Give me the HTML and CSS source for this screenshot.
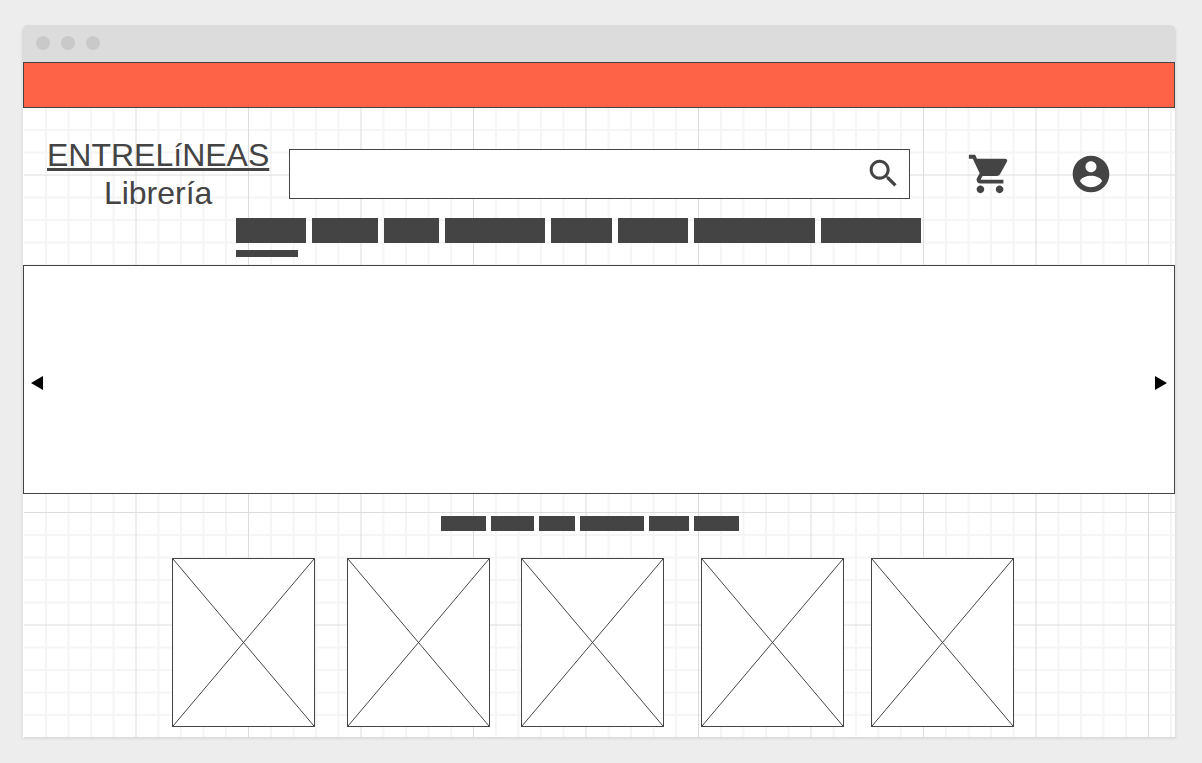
FILE: index.html
```html
<!DOCTYPE html>
<html lang="es">
<head>
<meta charset="utf-8">
<meta name="viewport" content="width=device-width, initial-scale=1">
<title>Entrelíneas Librería</title>
<link rel="stylesheet" href="styles.css">
</head>
<body>
<div class="window">
  <div class="titlebar" aria-hidden="true">
    <span class="dot"></span><span class="dot"></span><span class="dot"></span>
  </div>
  <div class="page">
    <div class="banner"></div>
    <header class="header">
      <div class="header-row">
        <h1 class="brand"><span class="brand-name">ENTRELíNEAS</span><span>Librería</span></h1>
        <form class="search" role="search">
          <input class="search-input" type="text" aria-label="Buscar">
          <button class="icon-button" type="button" aria-label="Buscar">
            <svg class="icon-search" viewBox="0 0 24 24"><path d="M15.5 14h-.79l-.28-.27C15.41 12.59 16 11.11 16 9.5 16 5.91 13.09 3 9.5 3S3 5.91 3 9.5 5.91 16 9.5 16c1.61 0 3.09-.59 4.23-1.57l.27.28v.79l5 4.99L20.49 19l-4.99-5zm-6 0C7.01 14 5 11.99 5 9.5S7.01 5 9.5 5 14 7.01 14 9.5 11.99 14 9.5 14z"/></svg>
          </button>
        </form>
        <div class="actions">
          <button class="icon-button" type="button" aria-label="Carrito">
            <svg class="icon-cart" viewBox="0 0 24 24"><path d="M7 18c-1.1 0-1.99.9-1.99 2S5.9 22 7 22s2-.9 2-2-.9-2-2-2zM1 2v2h2l3.6 7.59-1.35 2.45c-.16.28-.25.61-.25.96 0 1.1.9 2 2 2h12v-2H7.42c-.14 0-.25-.11-.25-.25l.03-.12.9-1.63h7.45c.75 0 1.41-.41 1.75-1.03l3.58-6.49c.08-.14.12-.31.12-.48 0-.55-.45-1-1-1H5.21l-.94-2H1zm16 16c-1.1 0-1.99.9-1.99 2s.89 2 1.99 2 2-.9 2-2-.9-2-2-2z"/></svg>
          </button>
          <button class="icon-button" type="button" aria-label="Cuenta">
            <svg class="icon-account" viewBox="0 0 24 24"><path d="M12 2C6.48 2 2 6.48 2 12s4.48 10 10 10 10-4.48 10-10S17.52 2 12 2zm0 3c1.66 0 3 1.34 3 3s-1.34 3-3 3-3-1.34-3-3 1.34-3 3-3zm0 14.2c-2.5 0-4.71-1.28-6-3.22.03-1.99 4-3.08 6-3.08 1.99 0 5.97 1.09 6 3.08-1.29 1.94-3.5 3.22-6 3.22z"/></svg>
          </button>
        </div>
      </div>
      <nav class="menu" aria-label="Principal">
        <div class="menu-links">
          <a class="bar w-70" href="#" aria-label="Inicio" aria-current="page"></a>
          <a class="bar w-66" href="#" aria-label="Libros"></a>
          <a class="bar w-55" href="#" aria-label="Autores"></a>
          <a class="bar w-100" href="#" aria-label="Novedades"></a>
          <a class="bar w-61" href="#" aria-label="Infantil"></a>
          <a class="bar w-70" href="#" aria-label="Ofertas"></a>
          <a class="bar w-121" href="#" aria-label="Recomendados"></a>
          <a class="bar w-100" href="#" aria-label="Contacto"></a>
        </div>
        <div class="menu-marker"></div>
      </nav>
    </header>
    <section class="carousel" aria-label="Destacados">
      <button class="icon-button" type="button" aria-label="Anterior">
        <svg class="icon-arrow" viewBox="0 0 12 14"><path d="M12 0v14L0 7z"/></svg>
      </button>
      <button class="icon-button" type="button" aria-label="Siguiente">
        <svg class="icon-arrow" viewBox="0 0 12 14"><path d="M0 0v14l12-7z"/></svg>
      </button>
    </section>
    <main class="shelf">
      <div class="heading">
        <span class="bar w-45"></span><span class="bar w-43"></span><span class="bar w-36"></span><span class="bar w-64"></span><span class="bar w-40"></span><span class="bar w-45"></span>
      </div>
      <div class="books">
        <svg class="book" viewBox="0 0 141 167"><path d="M0 0l141 167M141 0L0 167"/></svg>
        <svg class="book" viewBox="0 0 141 167"><path d="M0 0l141 167M141 0L0 167"/></svg>
        <svg class="book" viewBox="0 0 141 167"><path d="M0 0l141 167M141 0L0 167"/></svg>
        <svg class="book" viewBox="0 0 141 167"><path d="M0 0l141 167M141 0L0 167"/></svg>
        <svg class="book" viewBox="0 0 141 167"><path d="M0 0l141 167M141 0L0 167"/></svg>
      </div>
    </main>
  </div>
</div>
</body>
</html>
```

FILE: styles.css
```css
* { box-sizing: border-box; }

body {
  margin: 0;
  padding: 25px 26px 25px 22px;
  background: #ededed;
  color: #444;
  font-family: "Liberation Sans", Arial, sans-serif;
}

.window {
  border-radius: 6px 6px 0 0;
  box-shadow: 0 1px 3px rgba(0, 0, 0, 0.08);
}

.titlebar {
  display: flex;
  align-items: center;
  gap: 11px;
  height: 37px;
  padding: 0 0 2px 14px;
  border-radius: 6px 6px 0 0;
  background: #dcdcdc;
}

.dot {
  width: 14px;
  height: 14px;
  border-radius: 50%;
  background: #c9c9c9;
}

/* Squared paper: minor and major lines, repeating every two major cells */
.page {
  border: solid #e2e2e2;
  border-width: 0 1px;
  background-color: #fff;
  background-image:
    linear-gradient(#fff, #fff),
    url("data:image/svg+xml,%3Csvg xmlns='http://www.w3.org/2000/svg' width='225' height='225' fill='none'%3E%3Cpath stroke='%23f5f5f5' stroke-width='2' d='M23 0v225M45.5 0v225M68 0v225M90.5 0v225M135.5 0v225M158 0v225M180.5 0v225M203 0v225M0 23h225M0 45.5h225M0 68h225M0 90.5h225M0 135.5h225M0 158h225M0 180.5h225M0 203h225'/%3E%3Cpath stroke='%23dcdcdc' d='M.5 0v225M113 0v225M0 .5h225M0 113h225'/%3E%3C/svg%3E");
  background-size: 1px 100%, 225px 225px;
  background-repeat: no-repeat, repeat;
}

.banner {
  height: 46px;
  border: 1px solid #444;
  background: #ff6347;
}

.header { padding: 28px 0 8px; }

.header-row {
  display: flex;
  align-items: center;
  padding: 0 62px 0 24px;
}

.brand {
  display: flex;
  flex-direction: column;
  align-items: center;
  margin: 0 20px 0 0;
  font-size: 32px;
  font-weight: 400;
  line-height: 38px;
}

.brand-name {
  text-decoration: underline;
  text-decoration-thickness: 3px;
  text-decoration-skip-ink: none;
  text-underline-offset: 2px;
}

.search {
  display: flex;
  align-items: center;
  flex: 1;
  height: 50px;
  padding: 0 7px 2px 0;
  border: 1px solid #444;
  background: #fff;
}

.search-input {
  flex: 1;
  min-width: 0;
  height: 100%;
  padding: 0 12px;
  border: 0;
  outline: 0;
  background: transparent;
  color: inherit;
  font: inherit;
}

.icon-button {
  display: flex;
  padding: 0;
  border: 0;
  background: none;
}

.icon-button svg { fill: #444; }

.icon-search { width: 37px; height: 37px; }

.actions {
  display: flex;
  align-items: center;
  gap: 56px;
  margin-left: 57px;
}

.icon-cart { width: 46px; height: 46px; }
.icon-account { width: 44px; height: 44px; }

.menu {
  display: flex;
  flex-direction: column;
  gap: 7px;
  width: fit-content;
  margin: 6px auto 0;
  padding-right: 42px;
}

.menu-links { display: flex; gap: 6px; height: 25px; }

.menu-marker {
  width: 62px;
  height: 7px;
  background: #444;
}

.bar { background: #444; }

.w-36 { width: 36px; }
.w-40 { width: 40px; }
.w-43 { width: 43px; }
.w-45 { width: 45px; }
.w-55 { width: 55px; }
.w-61 { width: 61px; }
.w-64 { width: 64px; }
.w-66 { width: 66px; }
.w-70 { width: 70px; }
.w-100 { width: 100px; }
.w-121 { width: 121px; }

.carousel {
  display: flex;
  align-items: center;
  justify-content: space-between;
  height: 229px;
  padding: 7px 7px 0;
  border: 1px solid #444;
  background: #fff;
}

.icon-button .icon-arrow {
  width: 12px;
  height: 14px;
  fill: #000;
}

.shelf { padding: 22px 0 11px; }

.heading {
  display: flex;
  justify-content: center;
  gap: 5px;
  height: 15px;
  padding-right: 18px;
}

.books {
  display: grid;
  grid-template-columns: 175fr 174fr 180fr 170fr 143fr;
  margin: 27px 161px 0 149px;
}

.book {
  width: 143px;
  height: 169px;
  border: 1px solid #444;
  background: #fff;
  fill: none;
  stroke: #444;
}
```
